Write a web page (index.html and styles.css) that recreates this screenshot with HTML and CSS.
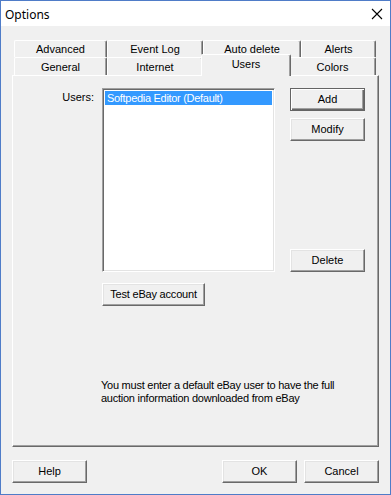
FILE: index.html
```html
<!DOCTYPE html>
<html>
<head>
<meta charset="utf-8">
<link rel="stylesheet" href="styles.css">
</head>
<body>
<div class="window">
  <div class="titlebar">
    <span class="title">Options</span>
    <svg class="close" width="12" height="12" viewBox="0 0 12 12"><path d="M1 1L11 11M11 1L1 11" stroke="#000" stroke-width="1.1" fill="none"/></svg>
  </div>
  <div class="content">
    <div class="tabs">
      <div class="tabrow row1">
        <div class="tab w-adv">Advanced</div>
        <div class="tab w-evt">Event Log</div>
        <div class="tab w-auto">Auto delete</div>
        <div class="tab w-alerts">Alerts</div>
      </div>
      <div class="tabrow row2">
        <div class="tab w-gen">General</div>
        <div class="tab w-int">Internet</div>
        <div class="tab w-users active">Users</div>
        <div class="tab w-colors">Colors</div>
      </div>
    </div>
    <div class="panel">
      <div class="grid">
        <div class="label">Users:</div>
        <div class="listbox">
          <div class="item selected">Softpedia Editor (Default)</div>
        </div>
        <div class="btncol">
          <div class="btn default">Add</div>
          <div class="btn mod">Modify</div>
          <div class="btn del">Delete</div>
        </div>
        <div class="testrow">
          <div class="btn test">Test eBay account</div>
        </div>
        <p class="note">You must enter a default eBay user to have the full<br>auction information downloaded from eBay</p>
      </div>
    </div>
    <div class="footer">
      <div class="btn">Help</div>
      <div class="spacer"></div>
      <div class="btn">OK</div>
      <div class="btn">Cancel</div>
    </div>
  </div>
</div>
</body>
</html>
```
FILE: styles.css
```css
* { box-sizing: border-box; }
html, body { margin: 0; padding: 0; }
body {
  width: 391px;
  height: 495px;
  font-family: "Liberation Sans", Arial, sans-serif;
  font-size: 11px;
  color: #000;
  background: #fff;
}
.window {
  width: 391px;
  height: 495px;
  border: 1px solid #4f7cc8;
  display: flex;
  flex-direction: column;
}
.titlebar {
  height: 25px;
  background: #fff;
  display: flex;
  align-items: center;
  justify-content: space-between;
  padding: 0 7px 0 4px;
}
.title {
  font-family: "Noto Sans", "Open Sans", sans-serif;
  font-size: 12px;
  padding-top: 1px;
}
.content {
  flex: 1;
  background: #f0f0f0;
  padding: 14px 11px 0 11px;
  display: flex;
  flex-direction: column;
}
.tabs { padding-left: 2px; }
.tabrow { display: flex; }
.row1 { height: 17px; }
.row2 { height: 18px; }
.tab {
  height: 100%;
  background: #f0f0f0;
  border-left: 1px solid #fff;
  border-top: 1px solid #fff;
  border-right: 1px solid #696969;
  box-shadow: inset -1px 0 0 #a0a0a0;
  border-top-left-radius: 2px;
  border-top-right-radius: 2px;
  text-align: center;
  line-height: 15px;
  padding-top: 1px;
  white-space: nowrap;
}
.row2 .tab { line-height: 16px; }
.w-adv { width: 93px; }
.w-evt { width: 96px; }
.w-auto { width: 98px; }
.w-alerts { width: 75px; }
.w-gen { width: 93px; }
.w-int { width: 96px; }
.w-users { width: 90px; }
.w-colors { width: 87px; }
.tab.active {
  position: relative;
  z-index: 1;
  margin: -3px -2px 0 -2px;
  height: 22px;
  line-height: 16px;
}
.panel {
  height: 372px;
  border-top: 1px solid #fff;
  border-left: 1px solid #fff;
  border-right: 1px solid #696969;
  border-bottom: 1px solid #696969;
  box-shadow: inset -1px -1px 0 #a0a0a0;
  padding-top: 12px;
}
.grid {
  display: grid;
  grid-template-columns: 89px 173px 75px;
  column-gap: 0;
}
.label {
  text-align: right;
  padding-right: 8px;
  padding-top: 3px;
}
.listbox {
  height: 184px;
  background: #fff;
  border-top: 1px solid #a0a0a0;
  border-left: 1px solid #a0a0a0;
  border-right: 1px solid #fff;
  border-bottom: 1px solid #fff;
  box-shadow: inset 1px 1px 0 #696969, inset -1px -1px 0 #e3e3e3;
  padding: 2px;
}
.item {
  height: 14px;
  line-height: 14px;
  padding-left: 2px;
  white-space: nowrap;
  letter-spacing: -0.3px;
}
.item.selected { background: #3399ff; color: #fff; }
.btncol {
  margin-left: 15px;
  display: flex;
  flex-direction: column;
}
.btn {
  width: 75px;
  height: 23px;
  background: #f0f0f0;
  border-top: 1px solid #fff;
  border-left: 1px solid #fff;
  border-right: 1px solid #696969;
  border-bottom: 1px solid #696969;
  box-shadow: inset -1px -1px 0 #a0a0a0, inset 1px 1px 0 #e3e3e3;
  display: flex;
  align-items: center;
  justify-content: center;
  padding-bottom: 2px;
  white-space: nowrap;
}
.btn.default {
  border: 1px solid #646464;
  box-shadow: inset 1px 1px 0 #fff, inset -1px -1px 0 #696969, inset -2px -2px 0 #a0a0a0;
}
.btn.mod { margin-top: 7px; }
.btn.del { margin-top: auto; }
.testrow {
  grid-column: 2 / 4;
  padding-top: 11px;
}
.btn.test { width: 103px; height: 23px; letter-spacing: -0.2px; }
.note {
  grid-column: 2 / 4;
  margin: 73px 0 0 -1px;
  line-height: 13px;
  letter-spacing: -0.25px;
}
.footer {
  display: flex;
  margin-top: 13px;
  gap: 7px;
}
.footer .spacer { flex: 1; }
```
